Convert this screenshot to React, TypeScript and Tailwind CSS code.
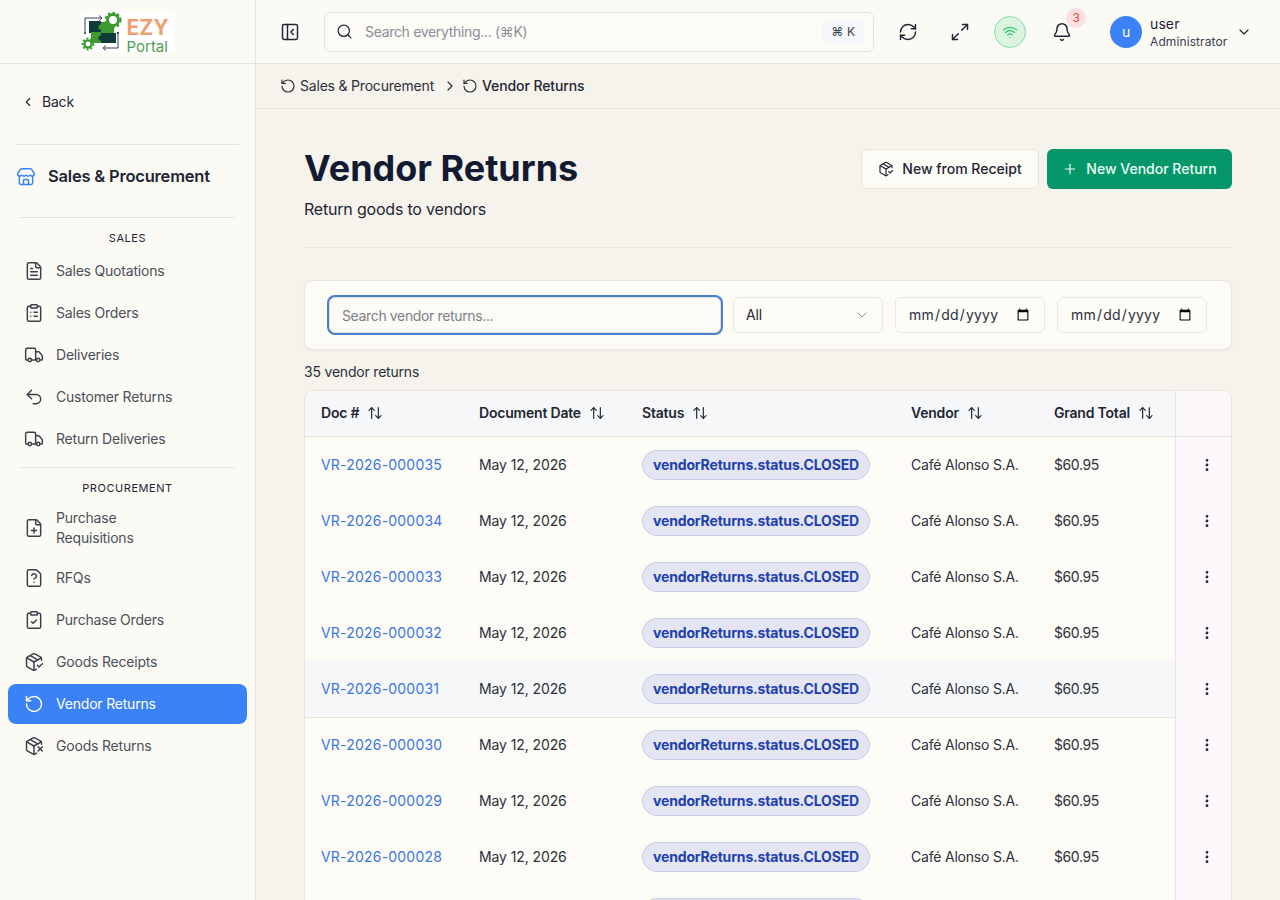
import React from "react";
import {
  ArrowUpDown, Bell, ChevronDown, ChevronLeft, ChevronRight, ClipboardCheck, ClipboardList,
  EllipsisVertical, FileQuestion, FilePlus, FileText, Maximize2, PackageCheck, PackageX, PanelLeftClose,
  Plus, RefreshCw, RotateCcw, Search, Store, Truck, Undo2, Wifi,
} from "lucide-react";

function Logo() {
  return (
    <div className="flex h-10 w-[94px] items-start bg-white">
      <svg width="46" height="40" viewBox="0 0 46 40" className="shrink-0">
        <path d="M4 20V6h16M18 3.5 21 6l-3 2.5M37 20v16H22M25 33.5 22 36l3 2.5" fill="none" stroke="#37474f" strokeWidth="1" />
        <rect x="8" y="9" width="12" height="12" fill="#0e3b3c" />
        <rect x="20" y="21" width="15" height="10" fill="#0e3b3c" />
        <rect x="20" y="10" width="13" height="11" fill="#3c9a30" />
        <rect x="10" y="20" width="10" height="11" fill="#3c9a30" />
        <circle cx="20" cy="15" r="2.6" fill="#3c9a30" />
        <circle cx="20" cy="26" r="2.6" fill="#0e3b3c" />
        <circle cx="32" cy="8" r="5.5" fill="#fff" stroke="#3c9a30" strokeWidth="3" />
        <circle cx="32" cy="8" r="7.6" fill="none" stroke="#3c9a30" strokeWidth="1.8" strokeDasharray="2.6 2.4" />
        <circle cx="7" cy="32" r="3.6" fill="#fff" stroke="#3c9a30" strokeWidth="2.4" />
        <circle cx="7" cy="32" r="5.6" fill="none" stroke="#3c9a30" strokeWidth="1.6" strokeDasharray="2 2" />
        <circle cx="4" cy="21" r="1" fill="#0e3b3c" />
        <circle cx="37" cy="21" r="1" fill="#0e3b3c" />
      </svg>
      <div className="mt-[5px] flex flex-col tracking-[0]">
        <span className="h-[21px] text-[21px] leading-[21px] font-bold text-[#f0a070]">EZY</span>
        <span className="mt-[1px] h-[15px] text-[15px] leading-[15px] text-[#4f9e52]">Portal</span>
      </div>
    </div>
  );
}

function NavItem({ icon: Icon, label, active, tall }: { icon: any; label: string; active?: boolean; tall?: boolean }) {
  return (
    <div
      className={`mx-2 flex items-center gap-3 rounded-lg px-4 text-sm ${tall ? "h-[56px]" : "h-10"} ${
        active ? "bg-[#3b82f6] text-white" : "text-[#4b5058]"
      }`}
    >
      <Icon size={20} strokeWidth={1.75} className={`shrink-0 ${active ? "text-white" : "text-[#3a3f4a]"}`} />
      <span className={tall ? "w-[110px] leading-5" : ""}>{label}</span>
    </div>
  );
}

function SectionLabel({ children }: { children: React.ReactNode }) {
  return (
    <div className="flex h-[22px] items-center justify-center text-[11px] tracking-[0.05em] text-[#1f2533]">{children}</div>
  );
}

function Sidebar() {
  return (
    <aside className="flex w-[256px] shrink-0 flex-col border-r border-[#e6e3d9] bg-[#fbfaf5]">
      <div className="flex h-16 shrink-0 items-center justify-center border-b border-[#e6e3d9]">
        <Logo />
      </div>
      <div className="mt-[18px] flex h-10 items-center gap-[7px] pl-[21px] text-sm text-[#1f2533]">
        <ChevronLeft size={14} strokeWidth={2} />
        <span>Back</span>
      </div>
      <div className="mx-4 mt-[22px] border-t border-[#e6e3d9]" />
      <div className="mt-[14px] flex h-9 items-center gap-[12px] pl-4 pb-[1px]">
        <Store size={20} strokeWidth={1.75} className="text-[#3b82f6]" />
        <span className="text-[16.5px] font-semibold text-[#1f2533]">Sales &amp; Procurement</span>
      </div>
      <div className="mx-5 mt-[22px] border-t border-[#e6e3d9]" />
      <div className="mt-[9px]">
        <SectionLabel>SALES</SectionLabel>
      </div>
      <div className="mt-[2px] flex flex-col gap-[2px]">
        <NavItem icon={FileText} label="Sales Quotations" />
        <NavItem icon={ClipboardList} label="Sales Orders" />
        <NavItem icon={Truck} label="Deliveries" />
        <NavItem icon={Undo2} label="Customer Returns" />
        <NavItem icon={Truck} label="Return Deliveries" />
      </div>
      <div className="mx-5 mt-[8px] border-t border-[#e6e3d9]" />
      <div className="mt-[9px]">
        <SectionLabel>PROCUREMENT</SectionLabel>
      </div>
      <div className="mt-[1px] flex flex-col gap-[2px]">
        <NavItem icon={FilePlus} label="Purchase Requisitions" tall />
        <NavItem icon={FileQuestion} label="RFQs" />
        <NavItem icon={ClipboardCheck} label="Purchase Orders" />
        <NavItem icon={PackageCheck} label="Goods Receipts" />
        <NavItem icon={RotateCcw} label="Vendor Returns" active />
        <NavItem icon={PackageX} label="Goods Returns" />
      </div>
    </aside>
  );
}

function TopBar() {
  return (
    <header className="flex h-16 shrink-0 items-center border-b border-[#e6e3d9] bg-[#fbfaf5] pl-[14px] text-[#1f2533]">
      <div className="flex h-10 w-10 items-center justify-center">
        <PanelLeftClose size={20} strokeWidth={1.75} />
      </div>
      <div className="ml-[14px] flex h-10 w-[550px] items-center rounded-md border border-[#e6e3d9] bg-[#fcfbf6] pl-[11px] pr-[9px]">
        <Search size={17} strokeWidth={1.75} />
        <span className="ml-[12px] flex-1 text-sm tracking-[-0.32px] text-[#8b8f96]">Search everything... (⌘K)</span>
        <span className="flex h-[22px] w-[42px] items-center justify-center gap-1 rounded bg-[#f4f6f9] text-xs text-[#374151]">
          <span>⌘</span>
          <span>K</span>
        </span>
      </div>
      <div className="ml-[14px] flex h-10 w-10 items-center justify-center">
        <RefreshCw size={20} strokeWidth={1.75} />
      </div>
      <div className="ml-[12px] flex h-10 w-10 items-center justify-center">
        <Maximize2 size={20} strokeWidth={1.75} />
      </div>
      <div className="ml-[14px] flex h-8 w-8 items-center justify-center rounded-full border border-[#86dfa6] bg-[#dcf3e0]">
        <Wifi size={16} strokeWidth={1.75} className="text-[#22c55e]" />
      </div>
      <div className="relative ml-[16px] flex h-10 w-10 items-center justify-center">
        <Bell size={20} strokeWidth={1.75} />
        <span className="absolute left-[24px] top-[-4px] flex h-5 w-5 items-center justify-center rounded-full bg-[#fbe0e0] text-xs text-[#ef4444]">
          3
        </span>
      </div>
      <div className="ml-[28px] flex h-8 w-8 items-center justify-center rounded-full bg-[#3b82f6] text-sm text-white">u</div>
      <div className="ml-2 mt-[2px] flex w-[78px] flex-col tracking-[0.1px]">
        <span className="text-sm leading-[18px]">user</span>
        <span className="text-xs leading-[18px] text-[#374151]">Administrator</span>
      </div>
      <ChevronDown size={16} strokeWidth={1.75} className="ml-[8px]" />
    </header>
  );
}

function Breadcrumb() {
  return (
    <div className="flex h-[45px] shrink-0 items-center border-b border-[#e9e6dc] bg-[#f5f3ec] pl-[24px] text-sm text-[#2b303b]">
      <RotateCcw size={16} strokeWidth={1.75} />
      <span className="ml-[4px]">Sales &amp; Procurement</span>
      <ChevronRight size={16} strokeWidth={1.75} className="ml-[8px]" />
      <RotateCcw size={16} strokeWidth={1.75} className="ml-[4px]" />
      <span className="ml-[4px] font-medium tracking-[-0.1px] text-[#1f2533]">Vendor Returns</span>
    </div>
  );
}

function Th({ children }: { children: React.ReactNode }) {
  return (
    <th className="h-[46px] border-b border-[#e6e3d9] bg-[#f5f7f8] pb-[2px] pl-4 text-left text-sm font-semibold text-[#1f2533]">
      <span className="flex items-center gap-2">
        {children}
        <ArrowUpDown size={16} strokeWidth={1.75} />
      </span>
    </th>
  );
}

const docs = ["000035", "000034", "000033", "000032", "000031", "000030", "000029", "000028", "000027"];

function Row({ id, hover }: { id: string; hover: boolean }) {
  const cell = `h-14 pl-4 text-sm text-[#2b303b] ${hover ? "bg-[#f5f7f8] shadow-[0_1px_0_#e3e3de]" : ""}`;
  return (
    <tr>
      <td className={`${cell} tracking-[0.2px] text-[#3b76dc]`}>VR-2026-{id}</td>
      <td className={`${cell} tracking-[-0.1px]`}>May 12, 2026</td>
      <td className={cell}>
        <span className="flex h-[30px] w-[228px] items-center justify-center rounded-full border border-[#c5cbe6] bg-[#e3e6f2] text-sm font-bold tracking-[-0.15px] text-[#1e40af]">
          vendorReturns.status.CLOSED
        </span>
      </td>
      <td className={cell}>Café Alonso S.A.</td>
      <td className={`${cell} tracking-[-0.4px]`}>$60.95</td>
      <td className="h-14 border-l border-[#e6e3d9] bg-[#fdf8fb]">
        <span className="flex justify-center pl-[6px] text-[#1f2533]">
          <EllipsisVertical size={16} strokeWidth={2.2} />
        </span>
      </td>
    </tr>
  );
}

function Content() {
  return (
    <main className="flex-1 overflow-hidden bg-[#f5f3ec] px-12 pt-10">
      <div className="flex items-start justify-between">
        <div>
          <h1 className="-mt-px text-[36px] leading-10 font-bold tracking-[0] text-[#111a30]">Vendor Returns</h1>
          <p className="mt-[9px] text-base leading-6 text-[#1f2533]">Return goods to vendors</p>
        </div>
        <div className="flex gap-2 tracking-[0]">
          <button className="flex h-10 w-[178px] items-center justify-center gap-2 rounded-md border border-[#e6e3d9] bg-[#fcfbf6] text-sm font-medium text-[#1f2533]">
            <PackageCheck size={16} strokeWidth={1.75} />
            New from Receipt
          </button>
          <button className="flex h-10 w-[185px] items-center justify-center gap-2 rounded-md bg-[#059669] text-sm font-medium text-[#eafff5]">
            <Plus size={16} strokeWidth={1.75} />
            New Vendor Return
          </button>
        </div>
      </div>
      <div className="mt-[26px] border-t border-[#e9e6dc]" />
      <div className="mt-8 flex h-[70px] items-center gap-3 rounded-lg border border-[#e9e6dc] bg-[#fcfbf5] px-6 shadow-[0_1px_2px_rgba(0,0,0,0.04)]">
        <input
          placeholder="Search vendor returns..."
          className="h-9 flex-1 rounded-md border border-[#e0ddd2] bg-[#fcfbf5] px-3 text-sm tracking-[-0.36px] text-[#1f2533] outline-none ring-2 ring-[#4a80d0] placeholder:text-[#7c8087]"
        />
        <div className="flex h-9 w-[150px] items-center justify-between rounded-md border border-[#e9e6dc] bg-[#fcfbf5] px-3 text-sm text-[#1f2533]">
          <span>All</span>
          <ChevronDown size={16} strokeWidth={1.5} className="text-[#8b8f96]" />
        </div>
        <input type="date" className="h-9 w-[150px] rounded-md border border-[#e9e6dc] bg-[#fcfbf5] px-3 text-sm tracking-[0.2px] text-[#2b303b] outline-none" />
        <input type="date" className="h-9 w-[150px] rounded-md border border-[#e9e6dc] bg-[#fcfbf5] px-3 text-sm tracking-[0.2px] text-[#2b303b] outline-none" />
      </div>
      <div className="mt-[12px] h-[20px] text-sm leading-5 text-[#2b303b]">35 vendor returns</div>
      <div className="mt-2 overflow-hidden rounded-t-lg border border-[#e9e6dc] bg-[#fcfbf5]">
        <table className="w-full table-fixed border-separate border-spacing-0">
          <colgroup>
            <col className="w-[158px]" />
            <col className="w-[163px]" />
            <col className="w-[269px]" />
            <col className="w-[143px]" />
            <col className="w-[137px]" />
            <col className="w-[56px]" />
          </colgroup>
          <thead>
            <tr>
              <Th>Doc #</Th>
              <Th>Document Date</Th>
              <Th>Status</Th>
              <Th>Vendor</Th>
              <Th>Grand Total</Th>
              <th className="h-[46px] border-b border-l border-[#e6e3d9] bg-[#fdf8fb]" />
            </tr>
          </thead>
          <tbody>
            {docs.map((d, i) => (
              <Row key={d} id={d} hover={i === 4} />
            ))}
          </tbody>
        </table>
      </div>
    </main>
  );
}

export default function App() {
  return (
    <div className="flex h-screen w-full overflow-hidden bg-[#fbfaf5] font-[Inter,sans-serif] tracking-[-0.2px]">
      <Sidebar />
      <div className="flex min-w-0 flex-1 flex-col">
        <TopBar />
        <Breadcrumb />
        <Content />
      </div>
    </div>
  );
}
